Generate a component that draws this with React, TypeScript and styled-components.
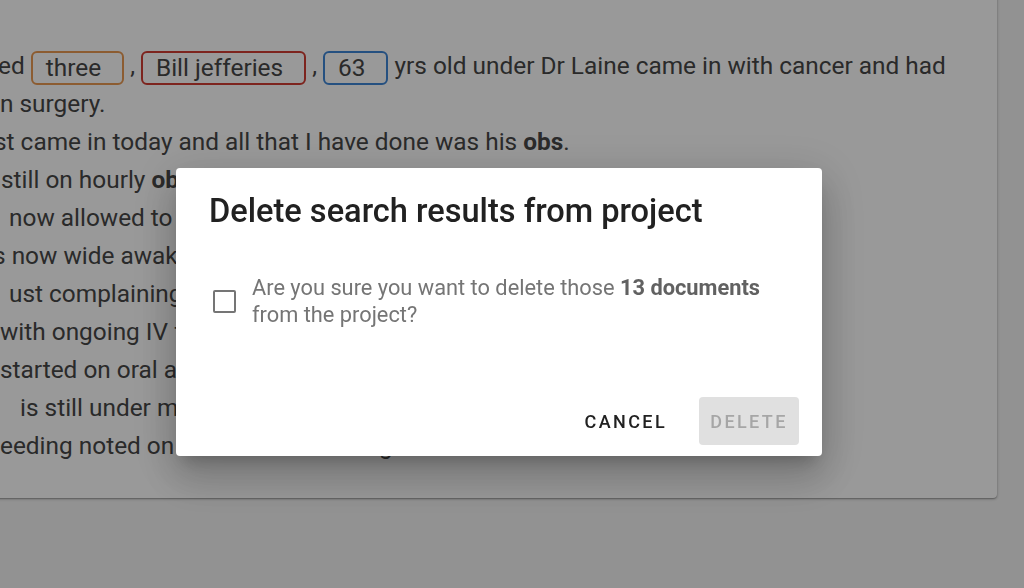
import styled, { createGlobalStyle } from 'styled-components';

const GlobalStyle = createGlobalStyle`
  html, body {
    margin: 0;
    padding: 0;
    width: 1024px;
    height: 588px;
    overflow: hidden;
    background: #f4f4f4;
    font-family: Roboto, "Noto Sans", Arial, sans-serif;
  }
`;

const Page = styled.div`
  width: 1024px;
  height: 588px;
  overflow: hidden;
`;

const Card = styled.div`
  width: 997px;
  margin: -20px 0 0 -24px;
  padding: 67px 0 33px 24px;
  background: #ffffff;
  border-radius: 4px;
  box-shadow: 0 1px 3px rgba(0, 0, 0, 0.3), 0 1px 1px rgba(0, 0, 0, 0.16);
  color: #474747;
  font-size: 24.4px;
  line-height: 38px;
`;

const Line = styled.div<{ $indent?: number }>`
  white-space: nowrap;
  text-indent: ${(p) => p.$indent ?? 0}px;

  b {
    font-weight: 700;
  }
`;

type ChipTone = 'orange' | 'red' | 'blue';

const chipColors: Record<ChipTone, string> = {
  orange: '#e99a52',
  red: '#d13c33',
  blue: '#3f86d6',
};

const Chip = styled.span<{ $tone: ChipTone }>`
  display: inline-block;
  box-sizing: border-box;
  height: 34px;
  line-height: 30px;
  padding: 0 21px 0 13px;
  border: 2px solid ${(p) => chipColors[p.$tone]};
  border-radius: 6px;
  text-indent: 0;
  vertical-align: middle;
`;

const Backdrop = styled.div`
  position: fixed;
  inset: 0;
  background: rgba(0, 0, 0, 0.4);
  display: flex;
  align-items: flex-start;
  padding: 168px 0 0 176px;
`;

const Dialog = styled.div`
  width: 646px;
  height: 288px;
  box-sizing: border-box;
  background: #ffffff;
  border-radius: 4px;
  box-shadow: 0 11px 15px -7px rgba(0, 0, 0, 0.2), 0 24px 38px 3px rgba(0, 0, 0, 0.14),
    0 9px 46px 8px rgba(0, 0, 0, 0.12);
  display: flex;
  flex-direction: column;
  padding: 23px 23px 11px 33px;
`;

const Title = styled.h2`
  margin: 0;
  font-size: 32.6px;
  line-height: 40px;
  font-weight: 500;
  color: #212121;
`;

const Body = styled.div`
  display: flex;
  align-items: center;
  gap: 16px;
  margin-top: 43px;
  padding-left: 4px;
`;

const CheckBox = styled.span`
  flex: none;
  width: 19px;
  height: 19px;
  border: 2px solid #757575;
  border-radius: 2px;
`;

const Message = styled.p`
  margin: 0;
  font-size: 21.8px;
  line-height: 27px;
  color: #757575;

  b {
    font-weight: 700;
    color: #616161;
  }
`;

const Actions = styled.div`
  margin-top: auto;
  display: flex;
  justify-content: flex-end;
  gap: 22px;
`;

const Button = styled.button<{ $disabled?: boolean }>`
  height: 48px;
  min-width: 100px;
  padding: 0 10px;
  border: none;
  border-radius: 4px;
  font-family: Roboto, "Noto Sans", Arial, sans-serif;
  font-size: 18px;
  font-weight: 500;
  letter-spacing: 2.4px;
  text-transform: uppercase;
  background: ${(p) => (p.$disabled ? '#e0e0e0' : 'transparent')};
  color: ${(p) => (p.$disabled ? '#a6a6a6' : '#212121')};
  cursor: ${(p) => (p.$disabled ? 'default' : 'pointer')};
`;

const App = () => (
  <Page>
    <GlobalStyle />
    <Card>
      <Line $indent={-2}>
        ed <Chip $tone="orange">three</Chip> , <Chip $tone="red">Bill jefferies</Chip> ,{' '}
        <Chip $tone="blue">63</Chip> yrs old under Dr Laine came in with cancer and had
      </Line>
      <Line>n surgery.</Line>
      <Line $indent={-6}>st came in today and all that I have done was his <b>obs</b>.</Line>
      <Line $indent={1}>still on hourly <b>obs</b> and stable overnight.</Line>
      <Line $indent={9}>now allowed to eat and drink as tolerated.</Line>
      <Line $indent={-7}>s now wide awake and talking to family.</Line>
      <Line $indent={9}>ust complaining of mild pain at wound site.</Line>
      <Line>with ongoing IV fluids running at 80ml/hr.</Line>
      <Line>started on oral antibiotics this morning.</Line>
      <Line $indent={20}>is still under monitoring for any changes.</Line>
      <Line>eeding noted on the wound dressing.</Line>
    </Card>
    <Backdrop>
      <Dialog role="dialog">
        <Title>Delete search results from project</Title>
        <Body>
          <CheckBox />
          <Message>
            Are you sure you want to delete those <b>13 documents</b>
            <br />
            from the project?
          </Message>
        </Body>
        <Actions>
          <Button>Cancel</Button>
          <Button $disabled>Delete</Button>
        </Actions>
      </Dialog>
    </Backdrop>
  </Page>
);

export default App;
